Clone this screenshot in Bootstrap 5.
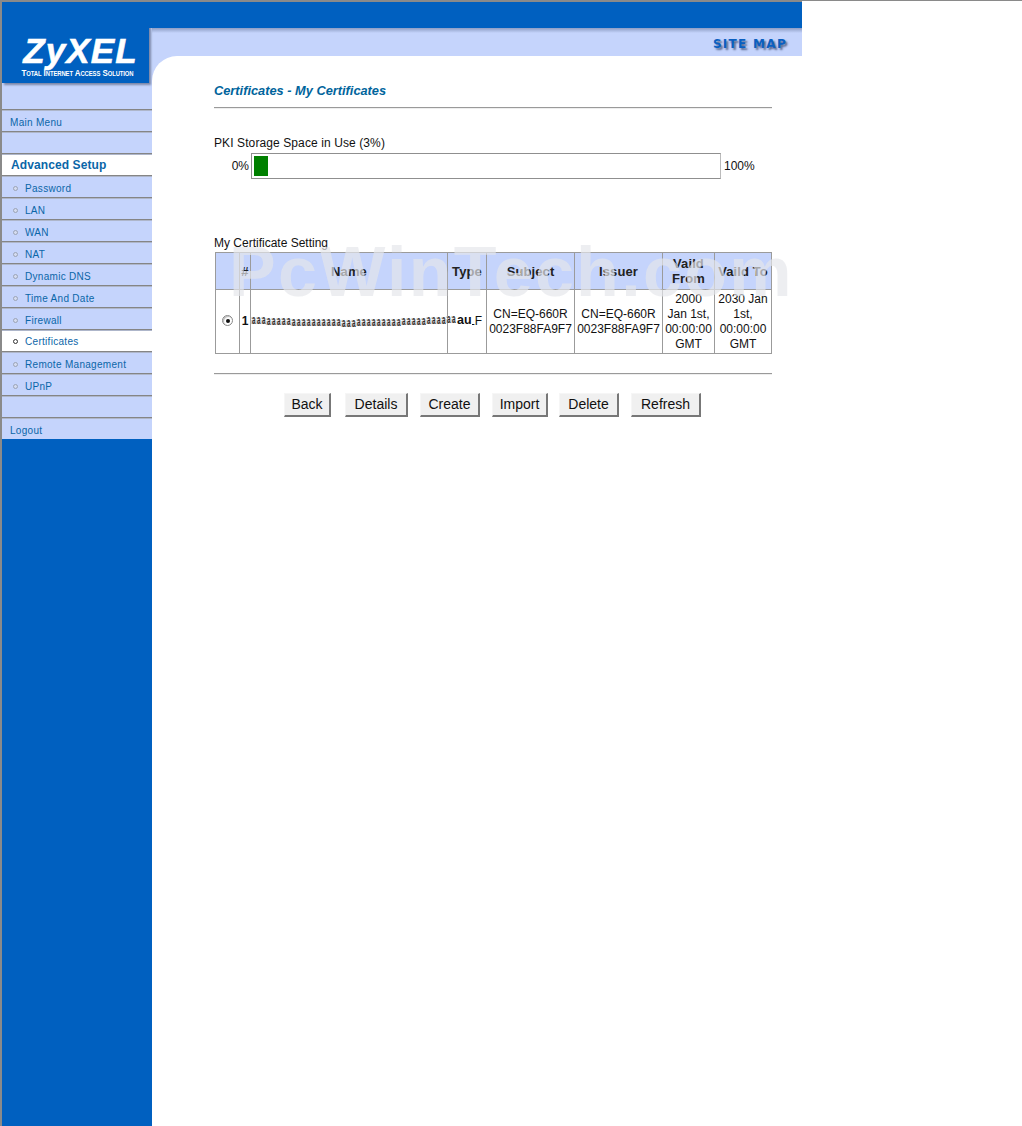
<!DOCTYPE html>
<html lang="en">
<head>
    <meta charset="UTF-8">
    <meta name="viewport" content="width=device-width, initial-scale=1.0">
    <title>Certificates - My Certificates</title>
    <link rel="stylesheet" href="https://cdn.jsdelivr.net/npm/bootstrap@5.3.3/dist/css/bootstrap.min.css">
    <style>
        html, body { height: 100%; }
        body { background: #fff; font-family: "Liberation Sans", Arial, sans-serif; font-size: 12px; color: #111; overflow: hidden; }
        .page-wrap { height: 1126px; border-top: 2px solid #8a8a8a; border-left: 2px solid #8a8a8a; width: 802px; }
        .page-line { position: absolute; top: 0; left: 802px; right: 0; height: 1px; background: #8a8a8a; }

        /* sidebar */
        .side-col { width: 150px; flex: none; background: #0060c0; }
        .logo-area { background: linear-gradient(#0060c0 26px, #c5d4fc 26px); height: 107px; }
        .logo-box { width: 147px; height: 81px; background: #0060c0; box-shadow: 2px 2px 2px #7c88a8; clip-path: inset(26px -5px -5px 0); color: #fff; text-align: center; padding-top: 33px; }
        .logo-name { font: italic bold 35px/32px "Liberation Sans", Arial, sans-serif; letter-spacing: 1.1px; padding-left: 10px; -webkit-text-stroke: .6px #fff; }
        .logo-tag { font: bold 9.5px/10px "Liberation Sans", Arial, sans-serif; font-variant: small-caps; letter-spacing: -.1px; margin-top: 1px; margin-left: 4px; white-space: nowrap; transform: scaleX(.84); }
        .side-row { height: 22px; background: #c5d4fc; border-top: 1px solid #858585; box-shadow: inset 0 1px 0 #aeb6ca; color: #0a66a8; font-size: 10px; letter-spacing: .3px; padding-left: 8px; padding-top: 3px; }
        .side-row.is-on { background: #fff; padding-top: 1px; }
        .side-row.is-head { font-size: 12px; font-weight: bold; letter-spacing: .1px; padding-left: 9px; }
        .side-dot { width: 5px; height: 5px; border-radius: 50%; border: 1px solid #9aa3b5; background: #d5dcf0; margin: 0 7px 0 3px; flex: none; }
        .is-on .side-dot { border-color: #333; background: #fff; }

        /* header */
        .main-col { width: 650px; flex: none; }
        .top-blue { height: 26px; background: #0060c0; }
        .top-strip { height: 28px; background: linear-gradient(#8d9dc4, #c5d4fc 5px); padding-right: 15px; }
        .site-map { font: bold 12px/1 "DejaVu Sans", sans-serif; color: #0a5fc0; text-shadow: 2px 2px 2px #56668f; letter-spacing: 1.3px; padding-top: 10px; }
        .main-back { background: #c5d4fc; height: 1072px; }
        .main-body { background: #fff; height: 100%; border-top-left-radius: 25px; padding: 26px 30px 0 62px; position: relative; }

        .page-title { font-size: 12.8px; font-weight: bold; font-style: italic; color: #00649c; line-height: 18px; }
        .gray-rule { height: 1px; background: #9a9a9a; box-shadow: 0 1px 0 #eee; margin: 0; opacity: 1; border: 0; }
        .title-rule { margin-top: 7px; }
        .pki-label { margin-top: 27px; line-height: 16px; letter-spacing: .1px; }
        .pki-row { height: 26px; margin-top: 2px; }
        .pki-pct { width: 37px; text-align: right; padding-right: 2px; }
        .pki-bar { width: 470px; height: 26px; border: 1px solid; border-color: #8f8f8f #bbb #8f8f8f #8f8f8f; padding: 2px; }
        .pki-fill { height: 20px; background: #008000; }
        .pki-end { padding-left: 3px; }

        .set-label { margin-top: 56px; line-height: 16px; }
        .cert-tbl.table { width: 556px; margin: 1px 0 0 1px; table-layout: fixed; border-collapse: collapse; --bs-table-bg: transparent; }
        .cert-tbl.table > :not(caption) > * > * { padding: 0 1px; border: 1px solid #9b9b9b; text-align: center; vertical-align: middle; line-height: 15px; font-size: 12px; box-shadow: none; color: #111; }
        .cert-tbl.table > thead > tr > th { background: #c5d4fc; height: 37px; font-size: 13px; font-weight: bold; letter-spacing: .1px; color: #222; }
        .cert-tbl.table > tbody > tr > td { height: 64px; }
        .cert-tbl .name-cell { overflow: visible; position: relative; text-align: left; white-space: nowrap; }
        .c-a { width: 24px; } .c-b { width: 11px; } .c-c { width: 197px; } .c-d { width: 39px; }
        .c-e { width: 88px; } .c-f { width: 88px; } .c-g { width: 52px; } .c-h { width: 57px; }
        .pick-radio { width: 11px; height: 11px; border-radius: 50%; border: 1px solid #888; background: #fff; display: inline-block; position: relative; top: -1px; vertical-align: middle; box-shadow: inset 1px 1px 1px #bbb; }
        .pick-radio::after { content: ""; position: absolute; left: 3px; top: 3px; width: 4px; height: 4px; border-radius: 50%; background: #111; }
        #smearText { position: relative; z-index: 2; }
        .smear { display: inline-block; width: 5px; font: bold 13px/14px "Liberation Sans", sans-serif; }
        .smear > span { display: inline-block; transform-origin: left; color: #2a2a2a; text-shadow: -3px 0 1px #c4c4c4; }
        .smear-end { font-weight: bold; font-size: 12.5px; position: absolute; left: 200px; top: 23px; padding-left: 6px; background: #fff; z-index: 1; }
        .cert-rule { margin-top: 19px; }

        .water-mark { position: absolute; left: 77px; top: 176px; font: bold 70px/80px "Liberation Sans", sans-serif; color: rgba(228, 230, 235, .68); letter-spacing: 2.3px; white-space: nowrap; pointer-events: none; z-index: 3; }

        .btn-line { margin-top: 19px; padding-left: 70px; gap: 12px; }
        .old-btn.btn { height: 24px; padding: 0 0 1px; font-size: 14px; line-height: 20px; color: #111; background: #f0f0f0; border: 1px solid; border-color: #f6f6f6 #777 #777 #f6f6f6; border-width: 1px 2px 2px 1px; border-radius: 0; }
        .old-btn:nth-child(1) { width: 47px; margin-right: 2px; }
        .old-btn:nth-child(2) { width: 63px; }
        .old-btn:nth-child(3) { width: 60px; }
        .old-btn:nth-child(4) { width: 56px; margin-right: -1px; }
        .old-btn:nth-child(5) { width: 60px; }
        .old-btn:nth-child(6) { width: 70px; }
    </style>
</head>
<body>
    <div class="page-line"></div>
    <div class="page-wrap d-flex">
        <div class="side-col">
            <div class="logo-area">
                <div class="logo-box">
                    <div class="logo-name">ZyXEL</div>
                    <div class="logo-tag">Total Internet Access Solution</div>
                </div>
            </div>
            <div id="sideMenu"></div>
        </div>
        <div class="main-col">
            <div class="top-blue"></div>
            <div class="top-strip d-flex justify-content-end">
                <div class="site-map">SITE MAP</div>
            </div>
            <div class="main-back">
                <div class="main-body">
                    <div class="page-title">Certificates - My Certificates</div>
                    <hr class="gray-rule title-rule">
                    <div class="pki-label">PKI Storage Space in Use (3%)</div>
                    <div class="pki-row d-flex align-items-center">
                        <div class="pki-pct">0%</div>
                        <div class="pki-bar"><div class="pki-fill" id="pkiFill"></div></div>
                        <div class="pki-end">100%</div>
                    </div>
                    <div class="set-label">My Certificate Setting</div>
                    <table class="table cert-tbl">
                        <colgroup>
                            <col class="c-a"><col class="c-b"><col class="c-c"><col class="c-d"><col class="c-e"><col class="c-f"><col class="c-g"><col class="c-h">
                        </colgroup>
                        <thead>
                            <tr>
                                <th></th>
                                <th>#</th>
                                <th>Name</th>
                                <th>Type</th>
                                <th>Subject</th>
                                <th>Issuer</th>
                                <th>Vaild From</th>
                                <th>Vaild To</th>
                            </tr>
                        </thead>
                        <tbody>
                            <tr>
                                <td><span class="pick-radio"></span></td>
                                <td class="fw-bold">1</td>
                                <td class="name-cell"><span id="smearText"></span><span class="smear-end">au</span></td>
                                <td>SELF</td>
                                <td>CN=EQ-660R 0023F88FA9F7</td>
                                <td>CN=EQ-660R 0023F88FA9F7</td>
                                <td>2000 Jan 1st, 00:00:00 GMT</td>
                                <td>2030 Jan 1st, 00:00:00 GMT</td>
                            </tr>
                        </tbody>
                    </table>
                    <hr class="gray-rule cert-rule">
                    <div class="btn-line d-flex">
                        <button class="btn old-btn">Back</button>
                        <button class="btn old-btn">Details</button>
                        <button class="btn old-btn">Create</button>
                        <button class="btn old-btn">Import</button>
                        <button class="btn old-btn">Delete</button>
                        <button class="btn old-btn">Refresh</button>
                    </div>
                    <div class="water-mark">PcWinTech.com</div>
                </div>
            </div>
        </div>
    </div>

    <script>
        var menuRows = [
            { text: "Main Menu" },
            { text: "" },
            { text: "Advanced Setup", head: true, on: true },
            { text: "Password", dot: true },
            { text: "LAN", dot: true },
            { text: "WAN", dot: true },
            { text: "NAT", dot: true },
            { text: "Dynamic DNS", dot: true },
            { text: "Time And Date", dot: true },
            { text: "Firewall", dot: true },
            { text: "Certificates", dot: true, on: true },
            { text: "Remote Management", dot: true },
            { text: "UPnP", dot: true },
            { text: "" },
            { text: "Logout" }
        ];

        var menuBox = document.getElementById("sideMenu");
        menuRows.forEach(function(row) {
            var cls = "side-row d-flex align-items-center";
            if (row.on) cls += " is-on";
            if (row.head) cls += " is-head";
            var dot = row.dot ? '<span class="side-dot"></span>' : '';
            menuBox.innerHTML += `<div class="${cls}">${dot}<span>${row.text}</span></div>`;
        });

        document.getElementById("pkiFill").style.width = "14px";

        // the name is garbled on the real page, squeezed letters on a wavy baseline
        var smear = document.getElementById("smearText");
        for (var i = 0; i < 41; i++) {
            var drop = Math.round(Math.sin(i / 40 * Math.PI) * 3 - i / 40) - 1;
            smear.innerHTML += `<span class="smear"><span style="transform: translateY(${drop}px) scaleX(.5)">a</span></span>`;
        }
    </script>
    <script src="https://cdn.jsdelivr.net/npm/bootstrap@5.3.3/dist/js/bootstrap.bundle.min.js"></script>
</body>
</html>
